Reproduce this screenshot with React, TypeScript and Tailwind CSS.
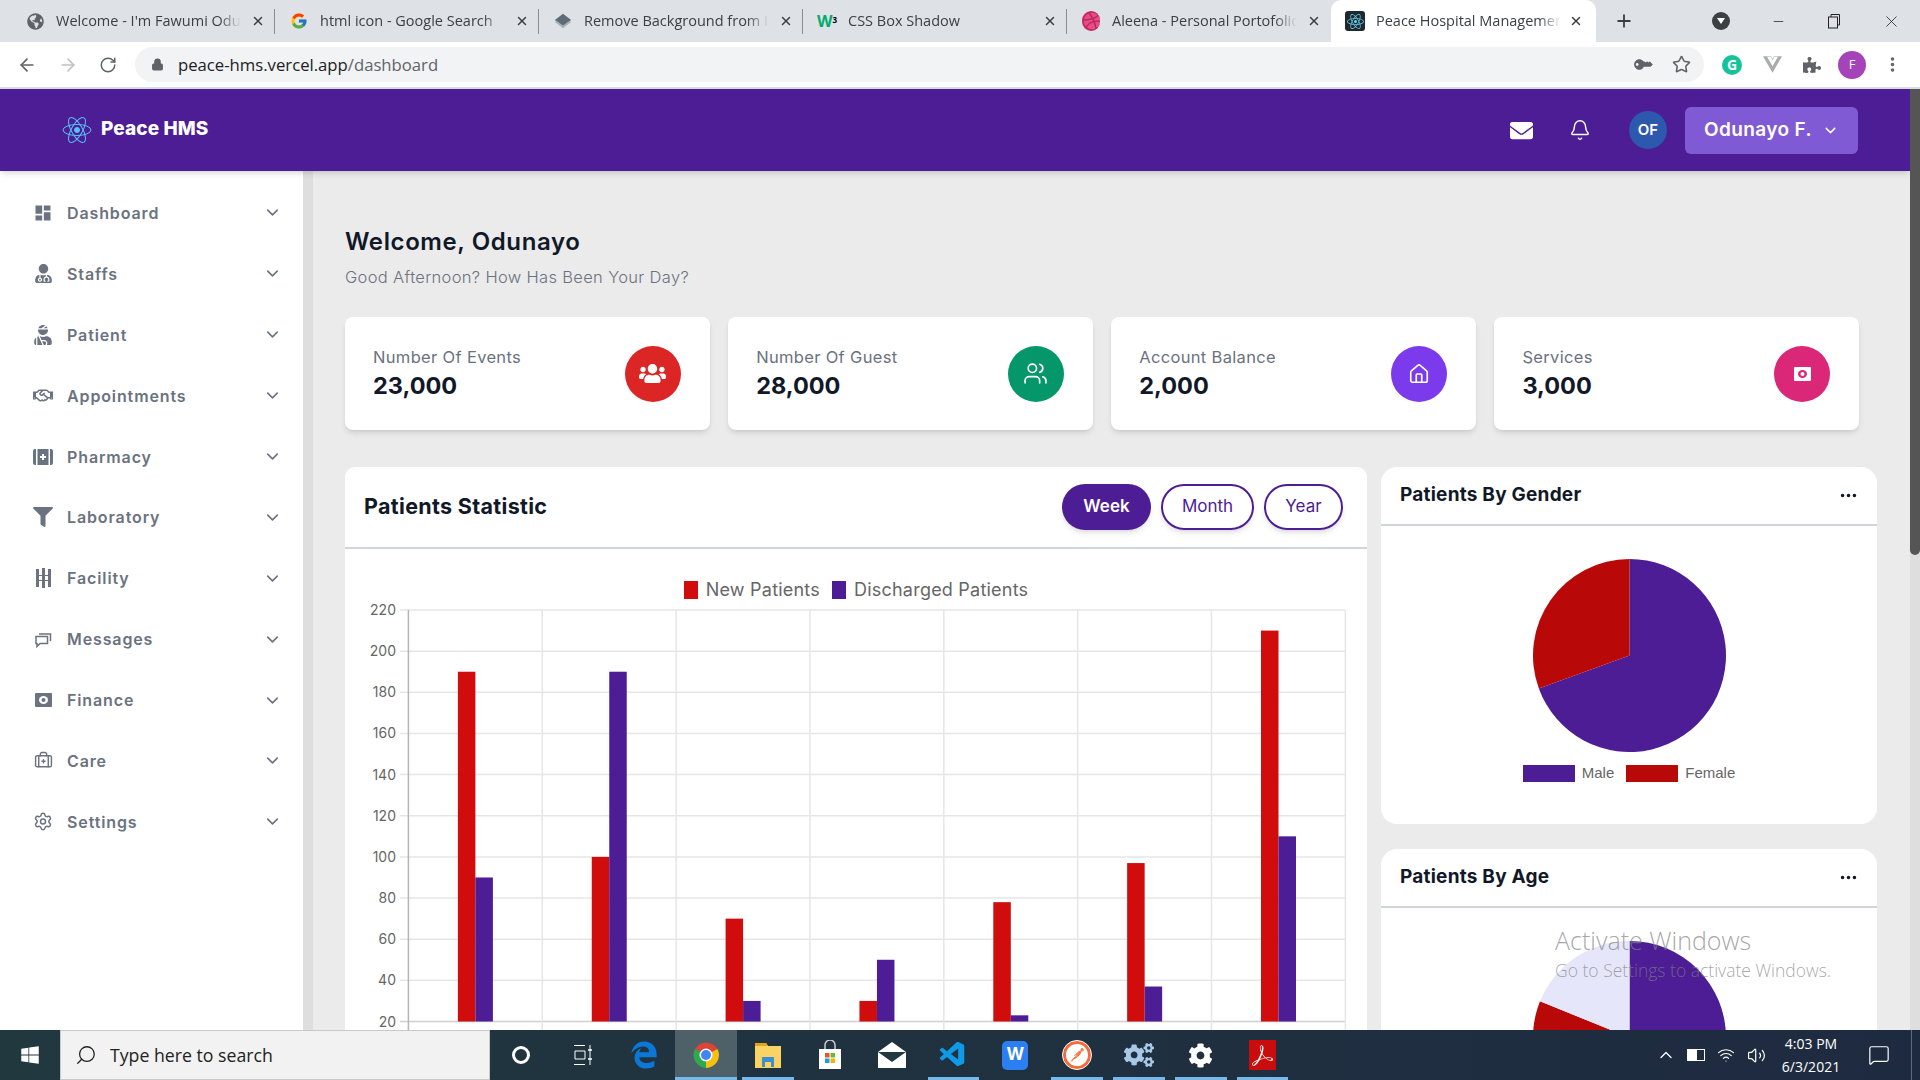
import React from 'react';
import { ChevronDown, Settings, Star, ArrowLeft, ArrowRight, RotateCw, Plus, X, Minus, MoreVertical, Lock, Bell, Users, Home, Search, BriefcaseMedical, ChevronUp, MessageSquare, Wifi, Volume2 } from 'lucide-react';
import { FaUserMd, FaUserInjured, FaRegHandshake, FaFilter, FaUsers, FaGlobeAmericas, FaDribbble, FaReact, FaKey, FaPuzzlePiece, FaWindows, FaCog, FaCogs, FaEnvelope, FaEdgeLegacy } from 'react-icons/fa';
import { FcGoogle } from 'react-icons/fc';
import { MdDashboard } from 'react-icons/md';
import { BsThreeDots } from 'react-icons/bs';
import { SiPostman, SiAdobeacrobatreader, SiVuedotjs } from 'react-icons/si';
import { VscVscode } from 'react-icons/vsc';

const tabs = [
  { title: "Welcome - I'm Fawumi Odunayo", icon: <FaGlobeAmericas className="text-[#5f6368]" size={17} /> },
  { title: 'html icon - Google Search', icon: <FcGoogle size={18} /> },
  { title: 'Remove Background from Image', icon: <svg width="20" height="18" viewBox="0 0 20 18"><path d="M10 1l9 7-9 7-9-7z" fill="#5f6b76" /><path d="M1 10l9 7 9-7-2-1-7 5-7-5z" fill="#a9b0b7" /></svg> },
  { title: 'CSS Box Shadow', icon: <span className="font-bold text-[16px] leading-none text-[#04aa6d]">W<sup className="text-[8px] text-black">3</sup></span> },
  { title: 'Aleena - Personal Portofolio', icon: <div className="w-[20px] h-[20px] rounded-full bg-[#ea4c89] overflow-hidden"><FaDribbble className="text-[#b8295f]" size={20} /></div> },
];

function PharmacyIcon() {
  return <svg width="20" height="18" viewBox="0 0 20 16" fill="currentColor"><path d="M0 2a2 2 0 012-2h1v16H2a2 2 0 01-2-2zM20 2a2 2 0 00-2-2h-1v16h1a2 2 0 002-2zM4.500 0h11v16h-11zM9 5v2H7v2h2v2h2V9h2V7h-2V5z" fillRule="evenodd" /></svg>;
}

function FacilityIcon() {
  return <svg width="15" height="20" viewBox="0 0 15 20" fill="currentColor"><path d="M0 1h3v18H0zM6 0h3v20H6zM12 1h3v18h-3z" /><path d="M0 7h15v1H0zM0 12h15v1H0z" /></svg>;
}

function MessagesIcon() {
  return <svg width="17" height="17" viewBox="0 0 17 17" fill="none" stroke="currentColor" strokeWidth="1.500"><path d="M1 5.500h11.500v7H5L2 15.500V12.500H1z" /><path d="M4 3h11.500v7" /></svg>;
}

function CashIcon({ hole = '#ffffff' }: { hole?: string }) {
  return <svg width="17" height="14" viewBox="0 0 17 14"><rect width="17" height="14" rx="1" fill="currentColor" /><ellipse cx="8.500" cy="7" rx="4.500" ry="4" fill={hole} /><ellipse cx="8.500" cy="7" rx="2" ry="2" fill="currentColor" /></svg>;
}

const menu = [
  { label: 'Dashboard', icon: <MdDashboard size={20} /> },
  { label: 'Staffs', icon: <FaUserMd size={19} /> },
  { label: 'Patient', icon: <FaUserInjured size={20} /> },
  { label: 'Appointments', icon: <FaRegHandshake size={21} /> },
  { label: 'Pharmacy', icon: <PharmacyIcon /> },
  { label: 'Laboratory', icon: <FaFilter size={20} /> },
  { label: 'Facility', icon: <FacilityIcon /> },
  { label: 'Messages', icon: <MessagesIcon /> },
  { label: 'Finance', icon: <CashIcon /> },
  { label: 'Care', icon: <BriefcaseMedical size={19} strokeWidth={1.800} /> },
  { label: 'Settings', icon: <Settings size={21} strokeWidth={1.800} /> },
];

const stats = [
  { label: 'Number Of Events', value: '23,000', bg: 'bg-[#dc2626]', icon: <FaUsers size={27} /> },
  { label: 'Number Of Guest', value: '28,000', bg: 'bg-[#059669]', icon: <Users size={25} strokeWidth={1.600} /> },
  { label: 'Account Balance', value: '2,000', bg: 'bg-[#7c3aed]', icon: <Home size={22} strokeWidth={1.800} /> },
  { label: 'Services', value: '3,000', bg: 'bg-[#db2777]', icon: <CashIcon hole="#db2777" /> },
];

const newPatients = [190, 100, 70, 30, 78, 97, 210];
const discharged = [90, 190, 30, 50, 23, 37, 110];
const ticks = [220, 200, 180, 160, 140, 120, 100, 80, 60, 40, 20];

// chart coords are relative to the card body (page x - 345, page y - 550)
const tickY = (v: number) => 471.5 - (v - 20) * 2.0575;

function BarChart() {
  return (
    <svg width="1022" height="480" className="block" fontFamily="Inter, sans-serif">
      {ticks.map((t) => (
        <g key={t}>
          <line x1="55" x2="1000" y1={tickY(t)} y2={tickY(t)} stroke={t === 20 ? '#cfcfcf' : '#e6e6e6'} strokeWidth="1.500" />
          <text x="51" y={tickY(t) + 5} textAnchor="end" fontSize="14" fill="#666666">{t}</text>
        </g>
      ))}
      {[1, 2, 3, 4, 5, 6, 7].map((i) => (
        <line key={i} x1={63.4 + 133.85 * i} x2={63.4 + 133.85 * i} y1="60" y2="480" stroke="#e6e6e6" strokeWidth="1.500" />
      ))}
      <line x1="63.400" x2="63.400" y1="60" y2="480" stroke="#b5b5b5" strokeWidth="1.500" />
      {newPatients.map((v, i) => {
        const c = 130.4 + 133.85 * i;
        return (
          <g key={i}>
            <rect x={c - 17.5} y={tickY(v)} width="17.500" height={471.5 - tickY(v)} fill="#d00c0c" />
            <rect x={c} y={tickY(discharged[i])} width="17.500" height={471.5 - tickY(discharged[i])} fill="#4c1d95" />
          </g>
        );
      })}
    </svg>
  );
}

function Pie({ slices }: { slices: { from: number; to: number; fill: string }[] }) {
  const pt = (deg: number) => {
    const a = (deg * Math.PI) / 180;
    return `${96.5 + 96.5 * Math.sin(a)} ${96.5 - 96.5 * Math.cos(a)}`;
  };
  return (
    <svg width="193" height="193" viewBox="0 0 193 193" className="block shrink-0">
      {slices.map((s) => (
        <path key={s.fill} d={`M96.5 96.5 L${pt(s.from)} A96.5 96.5 0 ${s.to - s.from > 180 ? 1 : 0} 1 ${pt(s.to)} Z`} fill={s.fill} />
      ))}
    </svg>
  );
}

function CardHeader({ title }: { title: string }) {
  return (
    <div className="h-[59px] shrink-0 border-b-2 border-[#d1d5db] flex items-center justify-between pl-[19px] pr-[19px]">
      <h2 className="text-[19px] font-bold tracking-[0.012em] text-[#111827]">{title}</h2>
      <BsThreeDots size={19} className="text-[#111827]" />
    </div>
  );
}

function BrowserTabs() {
  return (
    <div className="h-[42px] bg-[#dee1e6] flex pl-[11px] shrink-0 items-center">
      {tabs.map((t, i) => (
        <div key={t.title} className="w-[264px] h-[42px] flex items-center shrink-0 relative">
          <div className="w-[18px] ml-[15px] flex justify-center shrink-0">{t.icon}</div>
          <div className="ml-[12px] w-[185px] overflow-hidden whitespace-nowrap text-[14.500px] text-[#3c4043] [mask-image:linear-gradient(to_right,black_88%,transparent)]">{t.title}</div>
          <X size={14} strokeWidth={2.500} className="ml-[10px] text-[#3c4043]" />
          {i < 4 && <div className="absolute right-0 top-[9px] h-[25px] w-px bg-[#8a8d91]" />}
        </div>
      ))}
      <div className="w-[265px] h-[42px] bg-white rounded-t-[10px] flex items-center shrink-0">
        <div className="w-[20px] h-[20px] ml-[14px] bg-[#22272e] rounded-[3px] flex items-center justify-center shrink-0"><FaReact size={17} className="text-[#5fd3f3]" /></div>
        <div className="ml-[11px] w-[185px] overflow-hidden whitespace-nowrap text-[14.500px] text-[#3c4043] [mask-image:linear-gradient(to_right,black_88%,transparent)]">Peace Hospital Management</div>
        <X size={14} strokeWidth={2.500} className="ml-[8px] text-[#3c4043]" />
      </div>
      <Plus size={20} strokeWidth={2.200} className="ml-[18px] text-[#3c4043]" />
      <div className="ml-[78px] w-[18px] h-[18px] rounded-full bg-[#3c4043] flex items-center justify-center"><div className="border-x-[4px] border-x-transparent border-t-[6px] border-t-white" /></div>
      <Minus size={15} strokeWidth={1.200} className="ml-[41px] text-[#222]" />
      <svg width="14" height="16" viewBox="0 0 14 16" fill="none" stroke="#222" className="ml-[41px]"><rect x="1.500" y="4" width="9" height="11" /><path d="M4 4V1.500h8.500V12h-2" /></svg>
      <X size={19} strokeWidth={1} className="ml-[41px] text-[#222]" />
    </div>
  );
}

function BrowserToolbar() {
  return (
    <div className="h-[47px] bg-white border-b-2 border-[#dadce0] flex items-center pl-[7px] shrink-0">
      <div className="w-[40.500px] flex justify-center"><ArrowLeft size={20} className="text-[#5f6368]" /></div>
      <div className="w-[40.500px] flex justify-center"><ArrowRight size={20} className="text-[#bdc1c6]" /></div>
      <div className="w-[40.500px] flex justify-center"><RotateCw size={18} className="text-[#5f6368]" /></div>
      <div className="ml-[6.500px] w-[1569px] h-[35px] bg-[#f1f3f4] rounded-full flex items-center pl-[16px] pr-[13px]">
        <Lock size={13} fill="#5f6368" className="text-[#5f6368]" />
        <div className="ml-[14px] text-[16.700px] text-[#202124] font-['Open_Sans',sans-serif]">peace-hms.vercel.app<span className="text-[#5f6368]">/dashboard</span></div>
        <FaKey size={15} className="ml-auto text-[#5f6368] -rotate-[135deg]" />
        <Star size={19} className="ml-[22px] text-[#5f6368]" />
      </div>
      <div className="ml-[8px] w-[40px] flex justify-center"><div className="w-[20px] h-[20px] rounded-full bg-[#15c39a] text-white text-[14px] font-bold flex items-center justify-center leading-none">G</div></div>
      <div className="w-[40px] flex justify-center"><SiVuedotjs size={19} className="text-[#a8abaf]" /></div>
      <div className="w-[40px] flex justify-center"><FaPuzzlePiece size={18} className="text-[#5f6368]" /></div>
      <div className="w-[40px] flex justify-center"><div className="w-[28px] h-[28px] rounded-full bg-[#a543b9] text-white text-[13px] flex items-center justify-center">F</div></div>
      <div className="w-[40px] flex justify-center"><MoreVertical size={19} strokeWidth={2.500} className="text-[#5f6368]" /></div>
    </div>
  );
}

function Header() {
  return (
    <header className="h-[82px] bg-[#4c1d95] shrink-0 flex items-center pl-[62px] pr-[52px] shadow-md z-10 relative">
      <svg width="30" height="30" viewBox="-15 -15 30 30" fill="none" stroke="#57c4f5" strokeWidth="1">
        <ellipse rx="14" ry="5.500" />
        <ellipse rx="14" ry="5.500" transform="rotate(60)" />
        <ellipse rx="14" ry="5.500" transform="rotate(120)" />
        <circle r="2.500" fill="#57c4f5" />
      </svg>
      <div className="ml-[9px] mb-[2px] text-[19px] font-extrabold text-white tracking-[0.005em]">Peace HMS</div>
      <FaEnvelope size={23} className="ml-auto text-white" />
      <Bell size={22} strokeWidth={1.600} className="ml-[36px] text-white" />
      <div className="ml-[38px] w-[38px] h-[38px] rounded-full bg-[#2c58ae] text-white text-[15px] font-semibold flex items-center justify-center">OF</div>
      <div className="ml-[18px] w-[173px] h-[47px] rounded-[6px] bg-[#805ad5] flex items-center pl-[19px] text-white text-[19px] font-semibold tracking-[0.02em]">
        Odunayo F.
        <ChevronDown size={17} className="ml-[10px]" />
      </div>
    </header>
  );
}

function Sidebar() {
  return (
    <aside className="w-[303px] bg-white pt-[11.500px] shrink-0">
      {menu.map((m) => (
        <div key={m.label} className="h-[60.900px] flex items-center pl-[33px] text-[#6b7280]">
          <div className="w-[20px] flex justify-center shrink-0">{m.icon}</div>
          <span className="ml-[14px] text-[16px] font-semibold tracking-[0.055em]">{m.label}</span>
          <ChevronDown size={19} strokeWidth={2} className="ml-auto mr-[21px]" />
        </div>
      ))}
    </aside>
  );
}

function StatCard({ s }: { s: (typeof stats)[number] }) {
  return (
    <div className="h-[113px] bg-white rounded-[8px] shadow-md flex items-center justify-between pl-[28px] pr-[29px]">
      <div className="pb-[2px]">
        <div className="mb-[2px] text-[16.500px] leading-[24px] tracking-[0.02em] text-[#6b7280]">{s.label}</div>
        <div className="text-[23.500px] leading-[30px] font-bold text-[#111827]">{s.value}</div>
      </div>
      <div className={`w-[56px] h-[56px] rounded-full text-white flex items-center justify-center ${s.bg}`}>{s.icon}</div>
    </div>
  );
}

function Main() {
  return (
    <main className="flex-1 min-w-0 bg-[#ebebeb] pl-[32px] pr-[33px] pt-[55px]">
      <h1 className="text-[24px] leading-[32px] font-semibold tracking-[0.025em] text-[#111827]">Welcome, Odunayo</h1>
      <p className="mt-[7px] text-[16.500px] leading-[24px] tracking-[0.02em] text-[#6b7280] font-light">Good Afternoon? How Has Been Your Day?</p>
      <div className="mt-[28px] mr-[18px] grid grid-cols-4 gap-[18.500px]">
        {stats.map((s) => <StatCard key={s.label} s={s} />)}
      </div>
      <div className="mt-[37px] flex gap-[14px] items-start">
        <section className="w-[1022px] bg-white rounded-t-[10px] shrink-0">
          <div className="h-[82px] border-b-2 border-[#d1d5db] flex items-center pl-[19px] pr-[24px] gap-[10px]">
            <h2 className="mr-auto mb-[1px] text-[21.500px] font-bold tracking-[0.015em] text-[#111827]">Patients Statistic</h2>
            <button className="w-[89px] h-[46px] rounded-full bg-[#4c1d95] text-white text-[17px] font-semibold shadow-md">Week</button>
            <button className="w-[93px] h-[46px] rounded-full border-2 border-[#4c1d95] text-[#4c1d95] text-[17px] shadow-md">Month</button>
            <button className="w-[79px] h-[46px] rounded-full border-2 border-[#4c1d95] text-[#4c1d95] text-[17px] shadow-md">Year</button>
          </div>
          <div className="relative pt-[1px]">
            <div className="absolute top-[27px] left-0 right-0 flex justify-center items-center text-[18px] text-[#666666] tracking-[0.012em]">
              <div className="w-[14px] h-[18px] bg-[#d00c0c]" />
              <span className="ml-[8px]">New Patients</span>
              <div className="ml-[12px] w-[14px] h-[18px] bg-[#4c1d95]" />
              <span className="ml-[8px]">Discharged Patients</span>
            </div>
            <BarChart />
          </div>
        </section>
        <div className="w-[496px] shrink-0 flex flex-col gap-[25px]">
          <section className="h-[357px] bg-white rounded-[16px]">
            <CardHeader title="Patients By Gender" />
            <div className="flex flex-col items-center pt-[33px]">
              <Pie slices={[{ from: 0, to: 250, fill: '#4c1d95' }, { from: 250, to: 360, fill: '#b80808' }]} />
              <div className="mt-[10px] flex items-center text-[15px] text-[#666666] font-['Liberation_Sans',sans-serif]">
                <div className="w-[52px] h-[17px] bg-[#4c1d95]" />
                <span className="ml-[7px]">Male</span>
                <div className="ml-[12px] w-[52px] h-[17px] bg-[#b80808]" />
                <span className="ml-[7px]">Female</span>
              </div>
            </div>
          </section>
          <section className="bg-white rounded-t-[16px] h-[400px]">
            <CardHeader title="Patients By Age" />
            <div className="flex justify-center pt-[33px]">
              <Pie slices={[{ from: 0, to: 180, fill: '#4c1d95' }, { from: 180, to: 292, fill: '#b80808' }, { from: 292, to: 360, fill: '#e6e6fa' }]} />
            </div>
          </section>
        </div>
      </div>
    </main>
  );
}

function TaskIcon({ children, active, on }: { children: React.ReactNode; active?: boolean; on?: boolean }) {
  return (
    <div className={`relative w-[61.800px] h-full flex items-center justify-center shrink-0 ${active ? 'bg-[#4e6068]' : ''}`}>
      {children}
      {on && <div className={`absolute bottom-0 h-[3px] bg-[#76b9ed] ${active ? 'left-0 right-0' : 'left-[5px] right-[5px]'}`} />}
    </div>
  );
}

function Taskbar() {
  return (
    <div className="h-[50px] shrink-0 bg-gradient-to-r from-[#21383f] to-[#1e2a40] flex items-stretch z-20">
      <div className="w-[60px] flex items-center justify-center"><FaWindows size={20} className="text-white" /></div>
      <div className="w-[430px] bg-[#f2f2f2] border border-[#c8c8c8] flex items-center pl-[14px] text-[17.700px] text-[#222] font-['Open_Sans',sans-serif]">
        <Search size={22} strokeWidth={1.400} className="-scale-x-100" />
        <span className="ml-[13px]">Type here to search</span>
      </div>
      <TaskIcon><div className="w-[18px] h-[18px] rounded-full border-[3px] border-white" /></TaskIcon>
      <TaskIcon><svg width="20" height="22" viewBox="0 0 20 22" fill="none" stroke="#fff"><path d="M1 1.500h11M1 20.500h11M2 7h10v8H2zM17 1v20" /><path d="M15 6h4M15 15h4" strokeWidth="1.500" /></svg></TaskIcon>
      <TaskIcon><FaEdgeLegacy size={28} className="text-[#0b78d7]" /></TaskIcon>
      <TaskIcon active on>
        <svg width="28" height="28" viewBox="0 0 28 28">
          <path d="M14 14L3 8A13 13 0 0125.500 8z" fill="#db4437" />
          <path d="M14 14L25.500 8A13 13 0 0114 27z" fill="#f4c20d" />
          <path d="M14 14V27A13 13 0 013 8z" fill="#2da94f" />
          <circle cx="14" cy="14" r="6.500" fill="#fff" />
          <circle cx="14" cy="14" r="5" fill="#4285f4" />
        </svg>
      </TaskIcon>
      <TaskIcon on>
        <svg width="28" height="28" viewBox="0 0 28 28"><path d="M1 2h11l2 3h13v22H1z" fill="#f9d464" /><path d="M1 2h11l2 3H1z" fill="#e3a41b" /><path d="M8 16h12v10H8z" fill="#3e8fd1" /><path d="M11 21h6v5h-6z" fill="#f9d464" /></svg>
      </TaskIcon>
      <TaskIcon>
        <svg width="28" height="30" viewBox="0 0 28 30"><path d="M3 9h22v20H3z" fill="#fff" /><path d="M9 9V5a5 5 0 0110 0v4" fill="none" stroke="#ccc" strokeWidth="1.500" /><path d="M9 13h4.500v4.500H9z" fill="#e8562a" /><path d="M14.500 13H19v4.500h-4.500z" fill="#70b82f" /><path d="M9 18.500h4.500V23H9z" fill="#1b9de2" /><path d="M14.500 18.500H19V23h-4.500z" fill="#f5b400" /></svg>
      </TaskIcon>
      <TaskIcon>
        <svg width="30" height="28" viewBox="0 0 30 28"><path d="M15 1l14 10v16H1V11z" fill="#fff" /><path d="M1 11l28 0-14 10z" fill="#21383f" /></svg>
      </TaskIcon>
      <TaskIcon on><VscVscode size={30} className="text-[#0f9ae8]" /></TaskIcon>
      <TaskIcon><div className="w-[26px] h-[29px] rounded-[5px] bg-[#2b7ff0] text-white text-[17px] font-bold flex items-center justify-center">W</div></TaskIcon>
      <TaskIcon on><div className="w-[30px] h-[30px] rounded-full bg-[#f26b3a] border border-white flex items-center justify-center"><SiPostman size={22} className="text-white" /></div></TaskIcon>
      <TaskIcon on><FaCogs size={30} className="text-[#a9c8e6]" /></TaskIcon>
      <TaskIcon on><FaCog size={25} className="text-white" /></TaskIcon>
      <TaskIcon on><div className="w-[27px] h-[30px] bg-[#c90d0d] flex items-center justify-center"><SiAdobeacrobatreader size={21} className="text-white" /></div></TaskIcon>
      <div className="ml-auto flex items-center text-white font-['Open_Sans',sans-serif]">
        <div className="w-[30px] flex justify-center"><ChevronUp size={20} strokeWidth={1.500} /></div>
        <div className="w-[30px] flex justify-center"><div className="w-[18px] h-[12px] border border-white flex"><div className="w-[9px] bg-white" /></div></div>
        <div className="w-[30px] flex justify-center"><Wifi size={18} strokeWidth={1.500} /></div>
        <div className="w-[30px] flex justify-center"><Volume2 size={19} strokeWidth={1.500} /></div>
        <div className="w-[72px] ml-[4px] text-center text-[14px] leading-[23px]">
          <div>4:03 PM</div>
          <div>6/3/2021</div>
        </div>
        <div className="w-[64px] flex justify-center"><MessageSquare size={22} strokeWidth={1.300} /></div>
        <div className="w-[9px] h-full border-l border-[#5a6a76]" />
      </div>
    </div>
  );
}

export default function App() {
  return (
    <div className="relative h-screen w-[1920px] overflow-hidden flex flex-col font-['Inter',sans-serif]">
      <div className="font-['Open_Sans',sans-serif] shrink-0">
        <BrowserTabs />
        <BrowserToolbar />
      </div>
      <div className="flex-1 min-h-0 flex">
        <div className="flex-1 min-w-0 flex flex-col overflow-hidden">
          <Header />
          <div className="flex-1 min-h-0 flex overflow-hidden">
            <Sidebar />
            <div className="w-[10px] bg-[#dedede] shrink-0" />
            <Main />
          </div>
        </div>
        {/* page scrollbar */}
        <div className="w-[10px] bg-[#dedede] shrink-0">
          <div className="h-[466px] bg-[#555555] rounded-b-[5px]" />
        </div>
      </div>
      <Taskbar />

      {/* windows watermark */}
      <div className="absolute left-[1555px] top-[921px] font-['Open_Sans',sans-serif] font-light text-[#808080]/70 pointer-events-none">
        <div className="text-[25px] leading-[38px]">Activate Windows</div>
        <div className="text-[17.500px] leading-[23px]">Go to Settings to activate Windows.</div>
      </div>
    </div>
  );
}
